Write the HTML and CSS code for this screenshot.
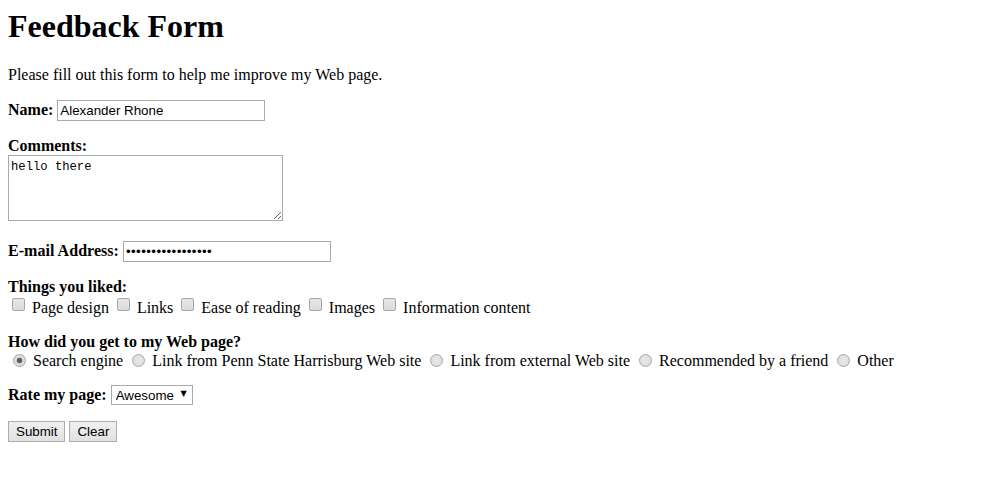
FILE: index.html
```html
<!DOCTYPE html>
<html>
<head>
<meta charset="utf-8">
<title>Feedback Form</title>
<link rel="stylesheet" href="styles.css">
</head>
<body class="page">
<h1 class="title">Feedback Form</h1>
<p class="para">Please fill out this form to help me improve my Web page.</p>
<form class="form">
  <p class="para"><b class="lbl">Name:</b> <input class="field field-name" type="text" value="Alexander Rhone"></p>
  <p class="para"><b class="lbl">Comments:</b><br><textarea class="area">hello there</textarea></p>
  <p class="para"><b class="lbl lbl-wide">E-mail Address:</b> <input class="field field-email" type="password" value="abcdefghijklmnopq"></p>
  <p class="para"><b class="lbl">Things you liked:</b><br><input class="check" type="checkbox"> Page design <input class="check" type="checkbox"> Links <input class="check" type="checkbox"> Ease of reading <input class="check" type="checkbox"> Images <input class="check" type="checkbox"> Information content</p>
  <p class="para para-tight"><b class="lbl">How did you get to my Web page?</b><br><input class="radio" type="radio" name="how" checked> Search engine <input class="radio" type="radio" name="how"> Link from Penn State Harrisburg Web site <input class="radio" type="radio" name="how"> Link from external Web site <input class="radio" type="radio" name="how"> Recommended by a friend <input class="radio" type="radio" name="how"> Other</p>
  <p class="para para-top"><b class="lbl">Rate my page:</b> <span class="select-wrap"><select class="select"><option>Awesome</option><option>Good</option><option>Okay</option><option>Poor</option></select></span></p>
  <p class="para"><input class="btn" type="submit" value="Submit"> <input class="btn" type="reset" value="Clear"></p>
</form>
</body>
</html>
```
FILE: styles.css
```css
html { background: #fff; }
.page {
  margin: 8px;
  font-family: "Liberation Serif", "Times New Roman", serif;
  font-size: 16px;
  color: #000;
}
.title {
  font-size: 32px;
  font-weight: bold;
  margin: 0 0 21px 0;
}
.form { margin: 0; }
.para { margin: 16px 0; }
.para-tight { margin-bottom: 15px; }
.para-top { margin-top: 15px; }
.lbl { font-weight: bold; }
.lbl-wide { letter-spacing: 0.04px; }

.field {
  font-family: "Liberation Sans", Arial, sans-serif;
  font-size: 13.33px;
  color: #000;
  border: 1px solid #a9a9a9;
  padding: 1px 2px;
  height: 21px;
  box-sizing: border-box;
  margin: 0;
  outline: none;
}
.field-name { width: 208px; }
.field-email { width: 208px; letter-spacing: 0.4px; }

.area {
  display: inline-block;
  width: 275px;
  height: 66px;
  box-sizing: border-box;
  border: 1px solid #a9a9a9;
  padding: 4px 2px 1px 2px;
  margin: 0;
  font-family: "Liberation Mono", "DejaVu Sans Mono", monospace;
  font-size: 12.2px;
  color: #000;
  resize: both;
  vertical-align: baseline;
}

.check {
  -webkit-appearance: none;
  appearance: none;
  width: 13px;
  height: 13px;
  margin: 2px 3px 3px 4px;
  border: 1px solid #a6a6a6;
  border-radius: 2px;
  background: linear-gradient(#e6e6e6, #dcdcdc);
  box-sizing: border-box;
  vertical-align: -1px;
}
.radio {
  -webkit-appearance: none;
  appearance: none;
  width: 13px;
  height: 13px;
  margin: 3px 3px 0 5px;
  border: 1px solid #a6a6a6;
  border-radius: 50%;
  background: radial-gradient(circle, #e8e8e8 0, #dadada 100%);
  box-sizing: border-box;
  vertical-align: -1px;
}
.radio:checked {
  background: radial-gradient(circle, #555 0, #666 2.5px, #dcdcdc 3.2px, #e2e2e2 100%);
}

.select-wrap {
  position: relative;
  display: inline-block;
}
.select-wrap::after {
  content: "\25BC";
  position: absolute;
  right: 6px;
  top: 4px;
  font-family: "DejaVu Sans", sans-serif;
  font-size: 8px;
  color: #000;
  pointer-events: none;
}
.select {
  -webkit-appearance: none;
  appearance: none;
  width: 82px;
  height: 20px;
  box-sizing: border-box;
  border: 1px solid #a9a9a9;
  border-radius: 0;
  background: #fff;
  padding: 0 0 0 4px;
  margin: 0;
  font-family: "Liberation Sans", Arial, sans-serif;
  font-size: 13.33px;
  color: #000;
}

.btn {
  -webkit-appearance: none;
  appearance: none;
  font-family: "Liberation Sans", Arial, sans-serif;
  font-size: 13.33px;
  color: #000;
  height: 21px;
  padding: 1px 7px;
  margin: 0;
  border: 1px solid #adadad;
  border-radius: 0;
  background: linear-gradient(#f0f0f0, #e1e1e1);
  box-sizing: border-box;
}
```
